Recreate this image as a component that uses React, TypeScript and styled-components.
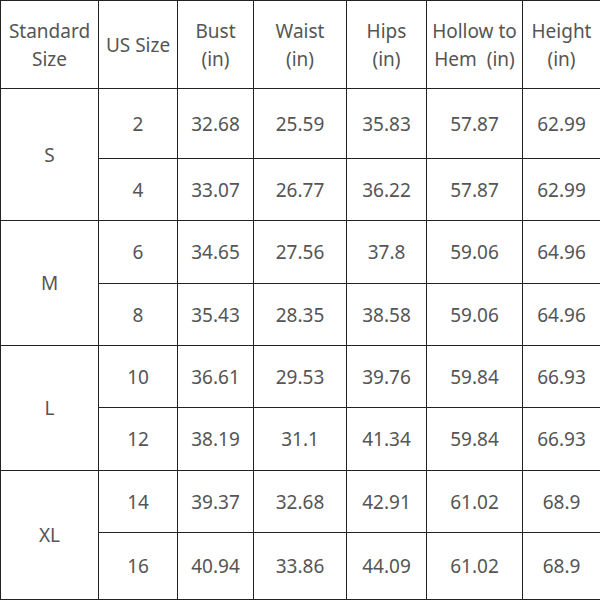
import React from "react";
import styled, { createGlobalStyle } from "styled-components";

const GlobalStyle = createGlobalStyle`
  html, body {
    margin: 0;
    padding: 0;
    background: #fff;
  }
`;

const Table = styled.table`
  width: 600px;
  height: 600px;
  table-layout: fixed;
  border-collapse: collapse;
  font-family: "Noto Sans", "Open Sans", sans-serif;
  font-size: 19px;
  color: #555;
`;

const Row = styled.tr<{ $h: number }>`
  height: ${(p) => p.$h}px;
`;

const Head = styled.th`
  border: 1px solid #222;
  font-weight: 400;
  line-height: 28px;
  text-align: center;
  vertical-align: middle;
  padding: 0;
`;

const HeadLine = styled.div`
  white-space: pre;
`;

const Cell = styled.td`
  border: 1px solid #222;
  text-align: center;
  vertical-align: middle;
  padding: 0;
`;

const widths = [98, 79, 76, 93, 80, 96, 78];

const headers = [
  ["Standard", "Size"],
  ["US Size"],
  ["Bust", "(in)"],
  ["Waist", "(in)"],
  ["Hips", "(in)"],
  ["Hollow to", "Hem  (in)"],
  ["Height", "(in)"]
];

const groups = [
  {
    size: "S",
    rows: [
      ["2", "32.68", "25.59", "35.83", "57.87", "62.99"],
      ["4", "33.07", "26.77", "36.22", "57.87", "62.99"]
    ],
    heights: [70, 62]
  },
  {
    size: "M",
    rows: [
      ["6", "34.65", "27.56", "37.8", "59.06", "64.96"],
      ["8", "35.43", "28.35", "38.58", "59.06", "64.96"]
    ],
    heights: [63, 62]
  },
  {
    size: "L",
    rows: [
      ["10", "36.61", "29.53", "39.76", "59.84", "66.93"],
      ["12", "38.19", "31.1", "41.34", "59.84", "66.93"]
    ],
    heights: [62, 63]
  },
  {
    size: "XL",
    rows: [
      ["14", "39.37", "32.68", "42.91", "61.02", "68.9"],
      ["16", "40.94", "33.86", "44.09", "61.02", "68.9"]
    ],
    heights: [62, 67]
  }
];

export default function App() {
  return (
    <>
      <GlobalStyle />
      <Table>
        <colgroup>
          {widths.map((w, i) => (
            <col key={i} style={{ width: w }} />
          ))}
        </colgroup>
        <thead>
          <Row $h={88}>
            {headers.map((lines, i) => (
              <Head key={i}>
                {lines.map((l, j) => (
                  <HeadLine key={j}>{l}</HeadLine>
                ))}
              </Head>
            ))}
          </Row>
        </thead>
        <tbody>
          {groups.map((g) =>
            g.rows.map((r, ri) => (
              <Row key={g.size + ri} $h={g.heights[ri]}>
                {ri === 0 && <Cell rowSpan={2}>{g.size}</Cell>}
                {r.map((v, ci) => (
                  <Cell key={ci}>{v}</Cell>
                ))}
              </Row>
            ))
          )}
        </tbody>
      </Table>
    </>
  );
}
